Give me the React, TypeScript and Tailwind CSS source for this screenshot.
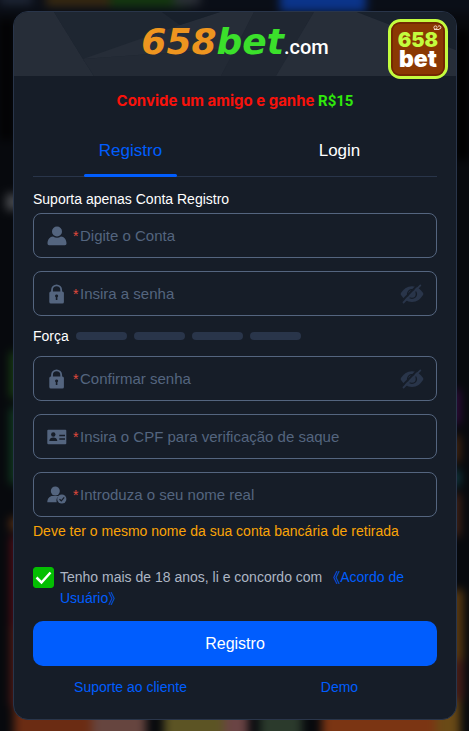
import type { ReactNode } from "react";

const Backdrop = () => (
  <svg
    className="absolute inset-0 w-full h-full overflow-visible blur-[5px]"
    viewBox="0 0 469 731"
    preserveAspectRatio="none"
    aria-hidden="true"
  >
    <rect x="-20" y="-20" width="509" height="771" fill="#07090d" />
    <rect x="-20" y="-20" width="509" height="34" fill="#0a0e17" />
    <rect x="46" y="-6" width="64" height="12" fill="#3a2a10" />
    <rect x="0" y="-6" width="32" height="10" fill="#202838" />
    <rect x="110" y="-8" width="78" height="15" fill="#14380f" />
    <rect x="174" y="-8" width="26" height="13" fill="#2c3038" />
    <rect x="280" y="-12" width="86" height="24" fill="#0b348a" />
    <rect x="0" y="20" width="13" height="120" fill="#020203" />
    <rect x="456" y="30" width="13" height="130" fill="#000000" />
    <rect x="6" y="194" width="14" height="16" fill="#4a4c50" />
    <rect x="10" y="352" width="14" height="46" fill="#173d12" />
    <rect x="10" y="408" width="14" height="76" fill="#103b20" />
    <rect x="10" y="518" width="14" height="12" fill="#5e3214" />
    <rect x="11" y="536" width="16" height="90" fill="#560d16" />
    <rect x="11" y="626" width="16" height="80" fill="#5a1c17" />
    <rect x="446" y="390" width="14" height="34" fill="#300a3c" />
    <rect x="446" y="436" width="14" height="26" fill="#44250f" />
    <rect x="446" y="470" width="14" height="16" fill="#103a40" />
    <rect x="446" y="494" width="14" height="42" fill="#442316" />
    <rect x="446" y="590" width="17" height="70" fill="#5b3a10" />
    <rect x="446" y="660" width="17" height="40" fill="#4b1f18" />
    <rect x="14" y="706" width="78" height="36" fill="#6b2c13" />
    <rect x="92" y="706" width="54" height="36" fill="#66453f" />
    <rect x="164" y="706" width="60" height="36" fill="#5c5424" />
    <rect x="224" y="706" width="24" height="36" fill="#6a4444" />
    <rect x="260" y="706" width="42" height="36" fill="#2b3a2c" />
    <rect x="322" y="706" width="114" height="36" fill="#7b3513" />
    <rect x="436" y="700" width="24" height="42" fill="#6a4a16" />
  </svg>
);

const Banner = () => (
  <div className="relative flex h-16 items-center justify-center">
    <svg
      className="absolute inset-0 w-full h-full rounded-t-[14px]"
      viewBox="0 0 442 64"
      preserveAspectRatio="none"
      aria-hidden="true"
    >
      <rect width="442" height="64" fill="#1c2430" />
      <path d="M0 0H40L69 47L80 64H0Z" fill="#262d38" />
      <path d="M40 0H148L166 13L206 0H245L223 36L207 64H80L69 47Z" fill="#1e2631" />
      <path d="M69 47L166 13L206 0H240L222 36L69 47Z" fill="#262d38" />
      <path d="M69 47L222 36L207 64H80Z" fill="#232a35" />
      <path d="M148 0H206L166 13Z" fill="#18202b" />
      <path d="M240 0H300L262 64H207Z" fill="#202732" />
      <path d="M300 0H343L442 38V64H262Z" fill="#272e39" />
      <path d="M343 0H442V38Z" fill="#1a222d" />
    </svg>

    <h1 className="relative flex items-baseline whitespace-nowrap">
      <span className="font-['DejaVu_Sans'] text-[36px] leading-10 font-bold italic text-[#ee951f]">
        658<span className="text-[#3be02b]">bet</span>
      </span>
      <span className="font-['Roboto'] text-[20px] leading-10 font-medium text-white">
        .com
      </span>
    </h1>

    <svg
      className="absolute top-[7px] right-2 w-[60px] h-[60px]"
      viewBox="0 0 60 60"
      role="img"
      aria-label="658bet"
    >
      <rect x="1.5" y="1.5" width="57" height="57" rx="11" fill="#8a3803" stroke="#c3fc3e" strokeWidth="3" />
      <rect x="4" y="4" width="52" height="52" rx="8" fill="none" stroke="#6d2503" strokeWidth="1.5" />
      <g fill="none" stroke="#f3d9c8" strokeWidth="1">
        <circle cx="47.5" cy="8.5" r="1.6" />
        <path d="M46 10.5H51M50 7.5A1.6 1.6 0 1 1 51 10" />
      </g>
      <text x="30" y="28" textAnchor="middle" className="font-['Inter'] text-[20px] font-black" fill="#c3fc3e">
        658
      </text>
      <text x="30" y="48" textAnchor="middle" className="font-['Inter'] text-[23px] font-black" fill="#ffffff">
        bet
      </text>
    </svg>
  </div>
);

const UserIcon = () => (
  <svg width="20" height="20" viewBox="0 0 20 20" fill="#54657f" aria-hidden="true">
    <circle cx="10" cy="5.5" r="5" />
    <path d="M0.500 17.500C0.500 13.500 3 10.500 6 10.500Q10 13 14 10.500C17 10.500 19.500 13.500 19.500 17.500Q19.500 19.200 18 19.200H2Q0.500 19.200 0.500 17.500Z" />
  </svg>
);

const LockIcon = () => (
  <svg width="20" height="20" viewBox="0 0 20 20" aria-hidden="true">
    <path d="M5 9V6A4.600 4.600 0 0 1 14.200 6V9" fill="none" stroke="#54657f" strokeWidth="1.800" />
    <rect x="2.300" y="7.500" width="14.600" height="12" rx="1.500" fill="#54657f" />
    <path d="M9.600 10.500A1.500 1.500 0 0 1 10.400 13.300V16H8.800V13.300A1.500 1.500 0 0 1 9.600 10.500Z" fill="#161d28" />
  </svg>
);

const CardIcon = () => (
  <svg width="20" height="20" viewBox="0 0 20 20" aria-hidden="true">
    <rect x="0.300" y="2.800" width="19" height="14.500" rx="1" fill="#54657f" />
    <circle cx="6.300" cy="7.500" r="2.200" fill="#161d28" />
    <path d="M2.300 14C2.300 11.500 4.300 10.500 6.300 10.500S10.300 11.500 10.300 14Z" fill="#161d28" />
    <path d="M12.300 8.500H18M12.300 12H18" stroke="#161d28" strokeWidth="1.500" />
  </svg>
);

const UserCheckIcon = () => (
  <svg width="20" height="20" viewBox="0 0 20 20" aria-hidden="true">
    <circle cx="8.300" cy="6" r="4.500" fill="#54657f" />
    <path d="M0.300 17.300C0.300 13.300 2.800 11 5.500 11H12C9.600 12.600 9 14.800 9.700 17.300Z" fill="#54657f" />
    <circle cx="14.800" cy="14" r="4.600" fill="#54657f" />
    <path d="M12.500 14.200L14.300 15.800L17.200 12.400" fill="none" stroke="#161d28" strokeWidth="1.200" />
  </svg>
);

const EyeOffIcon = () => (
  <svg width="24" height="20" viewBox="0 0 24 20" aria-hidden="true">
    <path d="M0.500 10C3 5 7.200 2.200 12 2.200S21 5 23.500 10C21 15 16.800 18 12 18S3 15 0.500 10Z" fill="#29354a" />
    <circle cx="12" cy="10" r="4.400" fill="none" stroke="#161d28" strokeWidth="1.400" />
    <path d="M1.500 17.500L19 -0.500" stroke="#161d28" strokeWidth="1.800" />
    <path d="M3 19L20.800 0.800" stroke="#29354a" strokeWidth="1.800" />
  </svg>
);

type FieldProps = {
  id: string;
  placeholder: string;
  icon: ReactNode;
  type?: string;
};

const Field = ({ id, placeholder, icon, type = "text" }: FieldProps) => (
  <div className="flex h-[45px] items-center rounded-lg border border-[#54657f] pr-3 pl-[13px]">
    <label htmlFor={id} aria-label={placeholder} className="flex shrink-0 items-center">
      {icon}
      <span className="ml-[6px] w-[7px] text-sm leading-5 text-[#e2493c]">*</span>
    </label>
    <input
      id={id}
      type={type}
      placeholder={placeholder}
      className="min-w-0 flex-1 bg-transparent text-[15px] leading-5 text-white outline-none placeholder:text-[#54657f]"
    />
    {type === "password" && (
      <button type="button" aria-label="Mostrar senha" className="shrink-0">
        <EyeOffIcon />
      </button>
    )}
  </div>
);

const App = () => {
  return (
    <div className="relative min-h-screen overflow-hidden bg-[#07090d] pt-[11px] pr-3 pb-[11px] pl-[13px] font-['Liberation_Sans','Noto_Sans_CJK_SC',sans-serif]">
      <Backdrop />

      <main className="relative rounded-[15px] border border-[#29354a] bg-[#161d28]">
        <Banner />

        <div className="px-[19px] pb-[22px]">
          <p className="pt-[15px] text-center text-[15px] leading-5 font-bold text-[#f9120b]">
            <span className="font-['Inter']">Convide um amigo e ganhe </span>
            <span className="font-['Roboto'] text-[#30e80b]">R$15</span>
          </p>

          <div role="tablist" className="mt-[14px] flex h-[52px] justify-between border-b border-[#29354a] px-[51px]">
            <button
              type="button"
              role="tab"
              aria-selected="true"
              className="relative w-[93px] text-[17px] leading-6 text-[#005dfe]"
            >
              Registro
              <span className="absolute inset-x-0 -bottom-px h-[3px] rounded-full bg-[#005dfe]"></span>
            </button>
            <button type="button" role="tab" aria-selected="false" className="w-[93px] text-[17px] leading-6 text-white">
              Login
            </button>
          </div>

          <form>
            <p className="pt-3 pb-1 text-sm leading-5 text-white">
              Suporta apenas Conta Registro
            </p>

            <div className="flex flex-col gap-[13px]">
              <Field id="account" placeholder="Digite o Conta" icon={<UserIcon />} />
              <Field id="password" type="password" placeholder="Insira a senha" icon={<LockIcon />} />
            </div>

            <div className="flex h-10 items-center gap-[7px] text-sm text-white">
              Força
              <span className="h-2 w-[51px] rounded-full bg-[#29354a]"></span>
              <span className="h-2 w-[51px] rounded-full bg-[#29354a]"></span>
              <span className="h-2 w-[51px] rounded-full bg-[#29354a]"></span>
              <span className="h-2 w-[51px] rounded-full bg-[#29354a]"></span>
            </div>

            <div className="flex flex-col gap-[13px]">
              <Field id="confirm" type="password" placeholder="Confirmar senha" icon={<LockIcon />} />
              <Field id="cpf" placeholder="Insira o CPF para verificação de saque" icon={<CardIcon />} />
              <Field id="name" placeholder="Introduza o seu nome real" icon={<UserCheckIcon />} />
            </div>

            <p className="pt-1 text-sm leading-5 text-[#faa407]">
              Deve ter o mesmo nome da sua conta bancária de retirada
            </p>

            <div className="mt-[26px] flex gap-[6px]">
              <div className="relative h-[21px] w-[21px] shrink-0">
                <input
                  id="terms"
                  type="checkbox"
                  defaultChecked
                  className="peer block h-full w-full appearance-none rounded-[3px] border border-[#54657f] checked:border-[#04be02] checked:bg-[#04be02]"
                />
                <svg
                  className="pointer-events-none absolute inset-0 hidden peer-checked:block"
                  viewBox="0 0 21 21"
                  aria-hidden="true"
                >
                  <path d="M3.500 10.500L8.500 15.500L17.500 5.500" fill="none" stroke="#ffffff" strokeWidth="2.500" />
                </svg>
              </div>
              <p className="pr-5 text-sm leading-[21px] text-[#adb6c4]">
                <label htmlFor="terms">Tenho mais de 18 anos, li e concordo com </label>
                <a href="#terms" className="text-[#005dfe]">
                  《Acordo de Usuário》
                </a>
              </p>
            </div>

            <button type="submit" className="mt-3 h-[45px] w-full rounded-[10px] bg-[#005dfe] text-base text-white">
              Registro
            </button>
          </form>

          <div className="mt-[11px] flex justify-between px-10 text-center text-sm leading-5 text-[#005dfe]">
            <a href="#support" className="w-[115px]">Suporte ao cliente</a>
            <a href="#demo" className="w-[115px]">Demo</a>
          </div>
        </div>
      </main>
    </div>
  );
};

export default App;
